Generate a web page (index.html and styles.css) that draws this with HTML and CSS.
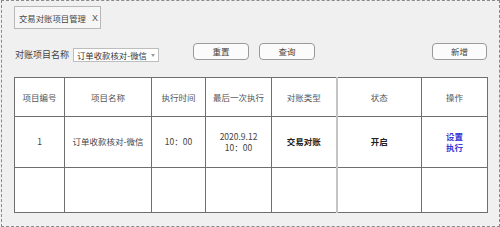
FILE: index.html
```html
<!DOCTYPE html>
<html lang="zh">
<head>
<meta charset="utf-8">
<link rel="stylesheet" href="styles.css">
</head>
<body>
<div class="frame">
  <div class="tab"><span>交易对账项目管理</span><span class="close">X</span></div>
  <div class="toolbar">
    <span class="label">对账项目名称</span>
    <div class="select"><span>订单收款核对-微信</span><span class="caret"></span></div>
    <button class="btn reset">重置</button>
    <button class="btn query">查询</button>
    <button class="btn add">新增</button>
  </div>
  <table class="grid">
    <colgroup>
      <col class="c1"><col class="c2"><col class="c3"><col class="c4"><col class="c5"><col class="c6"><col class="c7">
    </colgroup>
    <tr class="head">
      <th>项目编号</th><th>项目名称</th><th>执行时间</th><th>最后一次执行</th><th>对账类型</th><th class="soft">状态</th><th>操作</th>
    </tr>
    <tr class="data">
      <td>1</td><td>订单收款核对-微信</td><td>10：00</td><td>2020.9.12<br>10：00</td><td class="strong">交易对账</td><td class="strong soft">开启</td><td class="links"><a>设置</a><br><a>执行</a></td>
    </tr>
    <tr class="empty">
      <td></td><td></td><td></td><td></td><td></td><td class="soft"></td><td></td>
    </tr>
  </table>
</div>
</body>
</html>
```

FILE: styles.css
```css
* { box-sizing: border-box; }
html, body { margin: 0; padding: 0; background: #f0f0f0; }
body {
  font-family: "Noto Sans CJK SC", "Noto Sans", sans-serif;
  color: #444;
}
.frame {
  width: 499px;
  height: 227px;
  margin-left: 1px;
  border: 1px dashed #8a8a8a;
  background: #f0f0f0;
  padding: 5px 0 0 12px;
  display: flex;
  flex-direction: column;
}
.tab {
  width: 87px;
  height: 23px;
  border: 1px solid #b8b8b8;
  background: #f6f6f6;
  display: flex;
  align-items: center;
  padding-left: 4px;
  font-size: 8.4px;
  color: #444;
  gap: 6px;
  white-space: nowrap;
}
.tab .close { font-family: "Liberation Sans", sans-serif; font-size: 9px; color: #555; }
.toolbar {
  margin-top: 14px;
  height: 18px;
  display: flex;
  align-items: flex-start;
  width: 473px;
}
.label { font-size: 9px; color: #444; width: 59px; padding-left: 1px; margin-top: 5px; white-space: nowrap; }
.select {
  width: 86px;
  height: 14px;
  margin-top: 5px;
  background: #fff;
  border: 1px solid #bdbdbd;
  display: flex;
  align-items: center;
  justify-content: space-between;
  padding: 0 3px 0 3px;
  font-size: 8.4px;
  color: #333;
  white-space: nowrap;
}
.caret {
  width: 0; height: 0;
  border-left: 2.5px solid transparent;
  border-right: 2.5px solid transparent;
  border-top: 3px solid #999;
  margin-left: 4px;
}
.btn {
  height: 17px;
  width: 56px;
  border: 1px solid #9a9a9a;
  border-radius: 4px;
  background: #fbfbfb;
  font-family: inherit;
  font-size: 8.5px;
  color: #444;
  padding: 0;
  line-height: 1;
}
.reset { margin-left: 34px; }
.query { margin-left: 10px; }
.add { margin-left: auto; width: 55px; }
.grid {
  margin-top: 16px;
  width: 473px;
  border-collapse: collapse;
  table-layout: fixed;
  background: #fff;
  font-size: 8.5px;
  text-align: center;
}
.grid th, .grid td { border: 1px solid #6f6f6f; padding: 0; }
.grid .soft { border-left: 2px solid #c4c4c4; }
.c1 { width: 50px; } .c2 { width: 87px; } .c3 { width: 54px; } .c4 { width: 66px; }
.c5 { width: 65px; } .c6 { width: 85px; } .c7 { width: 66px; }
.head { height: 39px; }
.head th { font-weight: normal; color: #555; }
.data { height: 51px; }
.data td { color: #444; line-height: 1.35; }
.grid .strong { color: #222; font-weight: 600; }
.links a { color: #3a3ad6; font-weight: 600; }
.empty { height: 45px; }
```
